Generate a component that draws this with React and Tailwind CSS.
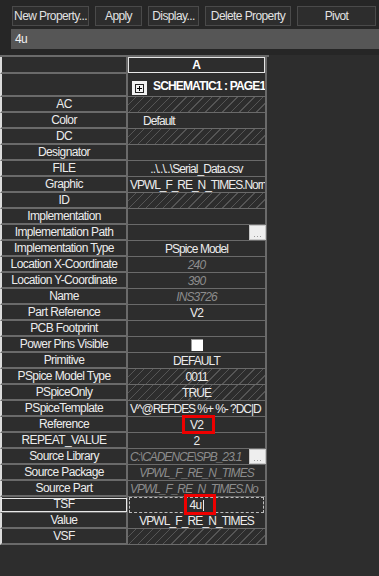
import React from "react";

const hatch =
  "bg-[repeating-linear-gradient(135deg,transparent_0,transparent_5px,#555555_5px,#555555_6px)]";

const rows = [
  { label: "AC", hatched: true },
  { label: "Color", value: "Default", align: "left" },
  { label: "DC", hatched: true },
  { label: "Designator" },
  { label: "FILE", value: "..\\..\\..\\Serial_Data.csv" },
  { label: "Graphic", value: "VPWL_F_RE_N_TIMES.Norm", align: "clip" },
  { label: "ID", hatched: true },
  { label: "Implementation" },
  { label: "Implementation Path", button: true },
  { label: "Implementation Type", value: "PSpice Model" },
  { label: "Location X-Coordinate", value: "240", italic: true },
  { label: "Location Y-Coordinate", value: "390", italic: true },
  { label: "Name", value: "INS3726", italic: true },
  { label: "Part Reference", value: "V2" },
  { label: "PCB Footprint" },
  { label: "Power Pins Visible", checkbox: true },
  { label: "Primitive", value: "DEFAULT" },
  { label: "PSpice Model Type", value: "0011", hatched: true },
  { label: "PSpiceOnly", value: "TRUE", hatched: true },
  { label: "PSpiceTemplate", value: "V^@REFDES %+ %- ?DC|D", align: "clip" },
  { label: "Reference", value: "V2", marked: true },
  { label: "REPEAT_VALUE", value: "2" },
  { label: "Source Library", value: "C:\\CADENCE\\SPB_23.1", italic: true, align: "clip", button: true },
  { label: "Source Package", value: "VPWL_F_RE_N_TIMES", italic: true },
  { label: "Source Part", value: "VPWL_F_RE_N_TIMES.No", italic: true, align: "clip" },
  { label: "TSF", editing: true },
  { label: "Value", value: "VPWL_F_RE_N_TIMES" },
  { label: "VSF", hatched: true },
];

function ToolButton({ w, children }) {
  return (
    <button
      className={`${w} h-[20px] border border-[#4a4a4a] bg-[#2d2d2d] text-[#e2e2e2] text-[12px] tracking-[-0.6px] leading-none`}
    >
      {children}
    </button>
  );
}

function DotsButton() {
  return (
    <div className="absolute right-[1px] top-[0px] w-[17px] h-[15px] bg-[#eeeeee] border border-[#c8c8c8] flex items-end justify-center pb-[2px] gap-[2px]">
      <span className="w-[1px] h-[1px] bg-[#9a9a9a]" />
      <span className="w-[1px] h-[1px] bg-[#9a9a9a]" />
      <span className="w-[1px] h-[1px] bg-[#9a9a9a]" />
    </div>
  );
}

function ValueCell({ row }) {
  const textColor = row.italic ? "text-[#8c8c8c] italic" : "text-[#ececec]";

  if (row.editing) {
    return (
      <div className="relative w-[139px] h-full border-r-2 border-[#6a6a6a] flex items-center">
        <div className="absolute inset-x-[1px] top-0 bottom-0 border border-dashed border-[#bdbdbd]" />
        <div className="w-full text-center text-[#ececec] flex justify-center items-center">
          <span>4u</span>
          <span className="w-[1px] h-[11px] bg-[#ececec] ml-[1px]" />
        </div>
        <div className="absolute left-[56px] top-[-3px] w-[32px] h-[21px] border-[3px] border-[#ee0000]" />
      </div>
    );
  }

  let content = null;
  if (row.value) {
    if (row.align === "left") {
      content = <span className={`pl-[15px] ${textColor}`}>{row.value}</span>;
    } else if (row.align === "clip") {
      content = (
        <span className={`pl-[2px] whitespace-nowrap tracking-[-1.05px] ${textColor}`}>{row.value}</span>
      );
    } else {
      content = <span className={`w-full text-center whitespace-nowrap ${textColor}`}>{row.value}</span>;
    }
  }

  return (
    <div className="relative w-[139px] h-full">
      <div
        className={`w-full h-full border-b border-r-2 border-[#6a6a6a] overflow-hidden flex items-center tracking-[-0.9px] ${
          row.hatched ? hatch : ""
        }`}
      >
        {content}
      </div>
      {row.checkbox && (
        <div className="absolute left-[63px] top-[2px] w-[12px] h-[12px] bg-white border-l border-t border-[#9a9a9a]" />
      )}
      {row.button && <DotsButton />}
      {row.marked && (
        <div className="absolute z-10 left-[54px] top-[-2px] w-[33px] h-[19px] border-[3px] border-[#ee0000]" />
      )}
    </div>
  );
}

export default function App() {
  return (
    <div className="w-[379px] h-[576px] bg-[#2d2d2d] overflow-hidden font-['Liberation_Sans',Arial,sans-serif] text-[12px] tracking-[-0.6px]">
      <div className="h-[55px] bg-[#262626] pt-[6px]">
        <div className="flex gap-[6px] pl-[12px]">
          <ToolButton w="w-[77px]">New Property...</ToolButton>
          <ToolButton w="w-[47px]">Apply</ToolButton>
          <ToolButton w="w-[51px]">Display...</ToolButton>
          <ToolButton w="w-[86px]">Delete Property</ToolButton>
          <ToolButton w="w-[79px]">Pivot</ToolButton>
        </div>
        <div className="ml-[11px] mt-[3px] h-[20px] bg-[#565656] text-[#f0f0f0] flex items-center pl-[4px]">
          4u
        </div>
      </div>

      <div className="w-[269px] border-t-2 border-[#6a6a6a]">
        <div className="flex h-[17px]">
          <div className="w-[128px] h-full border-l-2 border-r-2 border-b-2 border-l-[#dcdcdc] border-r-[#6a6a6a] border-b-[#6a6a6a]" />
          <div className="w-[139px] h-full border-r-2 border-[#6a6a6a] bg-[#2d2d2d] p-0">
            <div className="h-[16px] border border-[#e6e6e6] flex items-center justify-center font-bold text-white tracking-[-0.2px]">
              A
            </div>
          </div>
        </div>
        <div className="flex h-[23px]">
          <div className="w-[128px] h-full border-l-2 border-r-2 border-b-2 border-l-[#dcdcdc] border-r-[#6a6a6a] border-b-[#6a6a6a]" />
          <div className="relative w-[139px] h-full border-r-2 border-b border-[#6a6a6a] overflow-hidden">
            <div className="absolute left-[4px] top-[7px] w-[15px] h-[14px] bg-[#f2f2f2] flex items-center justify-center">
              <div className="relative w-[9px] h-[9px] border border-[#222]">
                <span className="absolute left-[1px] top-[3px] w-[5px] h-[1px] bg-black" />
                <span className="absolute left-[3px] top-[1px] w-[1px] h-[5px] bg-black" />
              </div>
            </div>
            <div className="absolute left-[25px] top-[3px] whitespace-nowrap font-bold text-white text-[12px] tracking-[-0.85px]">
              SCHEMATIC1 : PAGE1
            </div>
          </div>
        </div>

        {rows.map((row) => (
          <div key={row.label} className="flex h-[16px]">
            <div
              className={`w-[128px] h-full border-l-2 border-r-2 border-b-2 border-l-[#dcdcdc] border-r-[#6a6a6a] border-b-[#6a6a6a] flex items-center justify-center whitespace-nowrap text-[#ececec] ${
                row.editing ? "outline outline-1 -outline-offset-2 outline-[#e8e8e8]" : ""
              }`}
            >
              {row.label}
            </div>
            <ValueCell row={row} />
          </div>
        ))}
      </div>
    </div>
  );
}
